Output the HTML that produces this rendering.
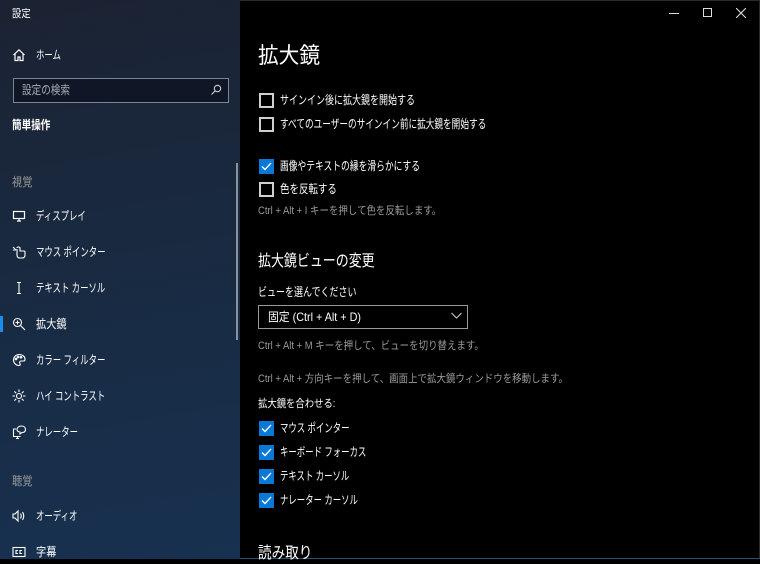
<!DOCTYPE html>
<html><head><meta charset="utf-8"><style>
*{margin:0;padding:0;box-sizing:border-box}
body{width:760px;height:559px;overflow:hidden;background:#000;font-family:"Liberation Sans","Noto Sans CJK JP",sans-serif;color:#fff;position:relative}
.side{position:absolute;left:0;top:0;width:240px;height:559px;background:linear-gradient(170deg,#1b2232 0%,#19293f 40%,#173150 100%);}
.t{position:absolute;white-space:nowrap;font-size:12px;line-height:14px;transform-origin:0 50%;transform:scaleX(.75)}
.side .t{transform:scaleX(.7)}
.h{transform:scaleX(.86)!important}
.ic{position:absolute;left:12px;width:14px;height:14px}
.g{color:#9a9a9a}
.cb{position:absolute;left:259px;width:15px;height:15px;border:2px solid #d0d0d0}
.cb.on{background:#0a78d7;border:none}
.right .t{left:280px}
</style></head><body>
<div class="side">
<div class="t" style="left:12px;top:7px;font-size:11px;transform:scaleX(.85)">設定</div>
<svg class="ic" style="top:48px" viewBox="0 0 14 14" fill="none" stroke="#fff" stroke-width="1.2"><path d="M1.5 7 7 1.8 12.5 7M3 5.8V12.5h3V9h2v3.5h3V5.8"/></svg>
<div class="t" style="left:36px;top:48px">ホーム</div>
<div style="position:absolute;left:13px;top:78px;width:216px;height:25px;border:1.5px solid #7d8594;background:#0f1726"></div>
<div class="t" style="left:22px;top:83px;color:#a8adb5;transform:scaleX(.8)">設定の検索</div>
<svg style="position:absolute;left:210px;top:84px" width="12" height="12" viewBox="0 0 12 12" fill="none" stroke="#ccc" stroke-width="1.1"><circle cx="7.5" cy="4.5" r="3.2"/><path d="M5.2 6.8 1.5 10.5"/></svg>
<div class="t" style="left:12px;top:118px;font-weight:bold;transform:scaleX(.8)">簡単操作</div>
<div class="t g" style="left:12px;top:175px;transform:scaleX(.85)">視覚</div>
<svg class="ic" style="top:209px" viewBox="0 0 14 14" fill="none" stroke="#fff" stroke-width="1.2"><rect x="1.5" y="2.5" width="11" height="7"/><path d="M5 12h4M7 9.5V12"/></svg>
<div class="t" style="left:36px;top:209px">ディスプレイ</div>
<svg class="ic" style="top:245px" viewBox="0 0 14 14" fill="none" stroke="#fff" stroke-width="1.1"><path d="M1 2l3 3M1 5h3M5 4v6q0 3 3 3h2q3 0 3-3V7q0-1-1-1H8V3q0-1-1.5-1S5 2 5 3"/></svg>
<div class="t" style="left:36px;top:245px">マウス ポインター</div>
<svg class="ic" style="top:281px" viewBox="0 0 14 14" fill="none" stroke="#fff" stroke-width="1.1"><path d="M5 1.5h4M5 12.5h4M7 1.5v11"/></svg>
<div class="t" style="left:36px;top:281px">テキスト カーソル</div>
<div style="position:absolute;left:0;top:316px;width:3px;height:16px;background:#1a8ee8"></div>
<svg class="ic" style="top:317px" viewBox="0 0 14 14" fill="none" stroke="#fff" stroke-width="1.1"><circle cx="5.5" cy="5.5" r="4"/><path d="M8.5 8.5 13 13M3.5 5.5h4M5.5 3.5v4"/></svg>
<div class="t" style="left:36px;top:317px;transform:scaleX(.85)">拡大鏡</div>
<svg class="ic" style="top:353px" viewBox="0 0 14 14" fill="none" stroke="#fff" stroke-width="1.1"><path d="M7 1.5a5.5 5.5 0 1 0 0 11c1.5 0 1.5-1.5 .8-2.3s0-2.2 1.5-2.2h2.2c1-0 1.5-.8 1.5-1.8C13 3.5 10.5 1.5 7 1.5z"/><circle cx="4" cy="6" r=".8"/><circle cx="6" cy="4" r=".8"/><circle cx="9" cy="4.2" r=".8"/></svg>
<div class="t" style="left:36px;top:353px">カラー フィルター</div>
<svg class="ic" style="top:389px" viewBox="0 0 14 14" fill="none" stroke="#fff" stroke-width="1.1"><circle cx="7" cy="7" r="2.5"/><path d="M7 .5v2.5M7 11v2.5M.5 7H3M11 7h2.5M2.4 2.4l1.8 1.8M9.8 9.8l1.8 1.8M2.4 11.6l1.8-1.8M9.8 4.2l1.8-1.8"/></svg>
<div class="t" style="left:36px;top:389px">ハイ コントラスト</div>
<svg class="ic" style="top:425px" viewBox="0 0 14 14" fill="none" stroke="#fff" stroke-width="1.1"><path d="M4 4H1.5v7.5h7M4 13.5h3M5.5 11.5v2"/><path d="M5 4.5C5 2.5 7 1 9.5 1S13.5 2.5 13.5 4.5 12 7.5 10 7.5L8 9V7C6 6.8 5 5.8 5 4.5z"/></svg>
<div class="t" style="left:36px;top:425px">ナレーター</div>
<div class="t g" style="left:12px;top:474px;transform:scaleX(.85)">聴覚</div>
<svg class="ic" style="top:509px" viewBox="0 0 14 14" fill="none" stroke="#fff" stroke-width="1.1"><path d="M1 5h2l3-3v10L3 9H1z"/><path d="M8.5 4.5q1.5 2.5 0 5M10.5 3q2.5 4 0 8"/></svg>
<div class="t" style="left:36px;top:509px">オーディオ</div>
<svg class="ic" style="top:545px" viewBox="0 0 14 14" fill="none" stroke="#fff" stroke-width="1.1"><rect x="1" y="2.5" width="12" height="9"/><path d="M6 5.5H4v3h2M10 5.5H8v3h2"/></svg>
<div class="t" style="left:36px;top:545px;transform:scaleX(.85)">字幕</div>
<div style="position:absolute;left:236px;top:163px;width:2px;height:177px;background:#8a929c"></div>
</div>
<div style="position:absolute;left:240px;top:0;width:520px;height:559px;border-top:1px solid #2a2a2a;border-right:1px solid #2a2a2a;border-bottom:1px solid #2a5070"></div>
<div style="position:absolute;left:669px;top:13px;width:10px;height:1px;background:#ddd"></div>
<div style="position:absolute;left:703px;top:8px;width:9px;height:9px;border:1px solid #ddd"></div>
<svg style="position:absolute;left:736px;top:8px" width="10" height="10" stroke="#ddd" stroke-width="1.1"><path d="M0 0l10 10M10 0 0 10"/></svg>
<div class="right">
<div class="t" style="left:258px;top:42px;font-size:22px;line-height:28px;transform:scaleX(.94)">拡大鏡</div>
<div class="cb" style="top:93px"></div><div class="t" style="top:93px">サインイン後に拡大鏡を開始する</div>
<div class="cb" style="top:117px"></div><div class="t" style="top:117px;transform:scaleX(.72)">すべてのユーザーのサインイン前に拡大鏡を開始する</div>
<div class="cb on" style="top:159px"><svg width="15" height="15" fill="none" stroke="#fff" stroke-width="1.3"><path d="M3 7.5l3 3 6-6.5"/></svg></div><div class="t" style="top:159px;transform:scaleX(.73)">画像やテキストの縁を滑らかにする</div>
<div class="cb" style="top:182px"></div><div class="t" style="top:182px;transform:scaleX(.79)">色を反転する</div>
<div class="t g h" style="left:258px;top:204px;font-size:11px">Ctrl + Alt + I キーを押して色を反転します。</div>
<div class="t" style="left:258px;top:252px;font-size:16px;line-height:20px;transform:scaleX(.81)">拡大鏡ビューの変更</div>
<div class="t" style="left:258px;top:285px">ビューを選んでください</div>
<div style="position:absolute;left:258px;top:305px;width:210px;height:24px;border:1.5px solid #999"></div>
<div class="t" style="left:268px;top:310px;transform:scaleX(.9)">固定 (Ctrl + Alt + D)</div>
<svg style="position:absolute;left:451px;top:312px" width="11" height="7" fill="none" stroke="#ccc" stroke-width="1.1"><path d="M.5 1 5.5 6 10.5 1"/></svg>
<div class="t g h" style="left:258px;top:339px;font-size:11px">Ctrl + Alt + M キーを押して、ビューを切り替えます。</div>
<div class="t g h" style="left:258px;top:372px;font-size:11px">Ctrl + Alt + 方向キーを押して、画面上で拡大鏡ウィンドウを移動します。</div>
<div class="t" style="left:258px;top:397px;font-size:11px;transform:scaleX(.85)">拡大鏡を合わせる:</div>
<div class="cb on" style="top:421px"><svg width="15" height="15" fill="none" stroke="#fff" stroke-width="1.3"><path d="M3 7.5l3 3 6-6.5"/></svg></div><div class="t" style="top:421px;transform:scaleX(.7)">マウス ポインター</div>
<div class="cb on" style="top:445px"><svg width="15" height="15" fill="none" stroke="#fff" stroke-width="1.3"><path d="M3 7.5l3 3 6-6.5"/></svg></div><div class="t" style="top:445px;transform:scaleX(.7)">キーボード フォーカス</div>
<div class="cb on" style="top:469px"><svg width="15" height="15" fill="none" stroke="#fff" stroke-width="1.3"><path d="M3 7.5l3 3 6-6.5"/></svg></div><div class="t" style="top:469px;transform:scaleX(.7)">テキスト カーソル</div>
<div class="cb on" style="top:493px"><svg width="15" height="15" fill="none" stroke="#fff" stroke-width="1.3"><path d="M3 7.5l3 3 6-6.5"/></svg></div><div class="t" style="top:493px;transform:scaleX(.7)">ナレーター カーソル</div>
<div class="t" style="left:258px;top:544px;font-size:16px;line-height:20px;transform:scaleX(.85)">読み取り</div>
</div>
</body></html>
